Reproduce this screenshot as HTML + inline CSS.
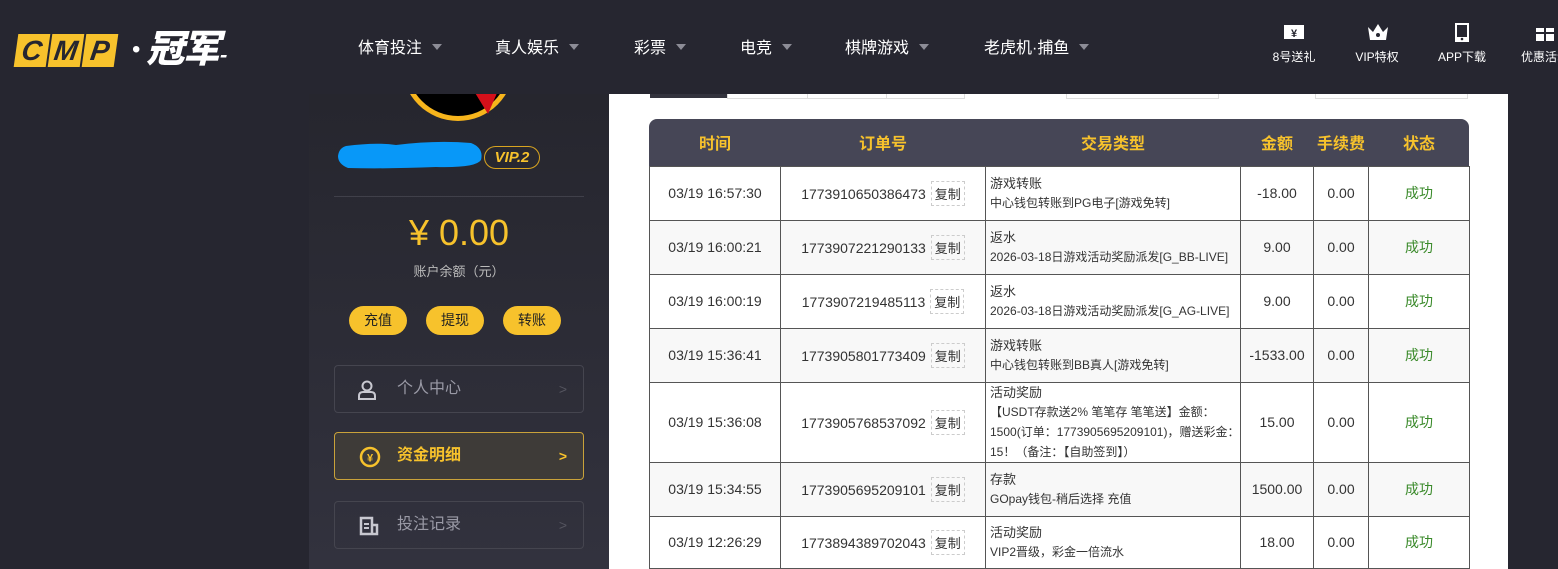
<!DOCTYPE html>
<html style="width:1558px;height:569px;overflow:hidden"><head><meta charset="utf-8"><style>
*{margin:0;padding:0;box-sizing:border-box}
body{width:1558px;height:569px;overflow:hidden;background:#262630;font-family:"Liberation Sans","Noto Sans CJK SC",sans-serif;position:relative}
.hdr{position:absolute;left:0;top:0;width:1558px;height:94px;background:#262630;z-index:5}
.logo{position:absolute;left:16px;top:28px;display:flex;align-items:center}
.lb{width:32px;height:33px;background:#f7c22c;color:#262630;font:italic 900 28px "Liberation Sans",sans-serif;display:flex;align-items:center;justify-content:center;margin-right:2px;transform:skewX(-8deg)}
.lt{color:#fff;font:italic 900 38px "Noto Sans CJK SC",sans-serif;margin-left:6px;letter-spacing:-2px;line-height:36px}
.nav{position:absolute;top:34px;color:#fff;font-size:16px}
.nav i{display:inline-block;margin-left:10px;border-left:5px solid transparent;border-right:5px solid transparent;border-top:6px solid #8c8c96;vertical-align:3px}
.ic{position:absolute;top:22px;color:#fff;font-size:12px;text-align:center;width:70px}
.ic .g{width:22px;height:20px;margin:0 auto 6px;position:relative}
.side{position:absolute;left:309px;top:94px;width:300px;height:475px;background:linear-gradient(#26262e,#32323e)}
.main{position:absolute;left:609px;top:94px;width:899px;height:475px;background:#fff;overflow:hidden}
.btn{position:absolute;top:306px;width:58px;height:29px;border-radius:15px;background:#f7c22c;color:#222;font-size:14px;text-align:center;line-height:29px}
.menu{position:absolute;left:334px;width:250px;height:48px;border:1px solid #45454f;border-radius:4px;color:#9a9aa6;font-size:16px;line-height:46px;padding-left:62px}
.menu .ar{position:absolute;right:16px;top:0;color:#55555f;font-size:14px}
table{position:absolute;left:40px;top:25px;border-collapse:collapse;font-size:14px;color:#333}
th{color:#f7c22c;font-size:16px;height:47px;font-weight:bold}
td{border:1px solid #555;text-align:center}
tr.e td{background:#f8f8f8}
td.t{text-align:left;padding-left:4px;font-size:13px;line-height:19px}
td.t span{font-size:12px}
.cp{display:inline-block;border:1px dashed #ccc;padding:2px 3px;font-size:13px;margin-left:5px}
.ok{color:#3a8a2a}
</style></head><body>
<div class="hdr">
 <div class="logo"><div class="lb">C</div><div class="lb">M</div><div class="lb">P</div><span style="color:#fff;font-size:24px;margin-left:14px">•</span><span class="lt">冠军<span style="font-size:20px">-</span></span></div>
 <div class="nav" style="left:358px">体育投注<i></i></div>
 <div class="nav" style="left:495px">真人娱乐<i></i></div>
 <div class="nav" style="left:634px">彩票<i></i></div>
 <div class="nav" style="left:740px">电竞<i></i></div>
 <div class="nav" style="left:845px">棋牌游戏<i></i></div>
 <div class="nav" style="left:984px">老虎机·捕鱼<i></i></div>
 <div class="ic" style="left:1259px"><div class="g"><svg width="22" height="20"><rect x="1" y="3" width="20" height="14" fill="#fff"/><text x="11" y="15" font-size="11" text-anchor="middle" fill="#262630" font-weight="bold">¥</text></svg></div>8号送礼</div>
 <div class="ic" style="left:1342px"><div class="g"><svg width="24" height="20"><path d="M2 5 L7 10 L12 2 L17 10 L22 5 L20 18 L4 18Z" fill="#fff"/><circle cx="12" cy="13" r="2" fill="#262630"/></svg></div>VIP特权</div>
 <div class="ic" style="left:1427px"><div class="g"><svg width="22" height="22"><rect x="4" y="1" width="14" height="19" fill="#fff"/><rect x="6" y="3" width="10" height="12" fill="#262630"/><circle cx="11" cy="17" r="1.3" fill="#262630"/></svg></div>APP下载</div>
 <div class="ic" style="left:1510px"><div class="g"><svg width="22" height="20"><rect x="2" y="6" width="18" height="13" fill="#fff"/><rect x="10" y="6" width="2" height="13" fill="#262630"/><rect x="2" y="10" width="18" height="2" fill="#262630"/></svg></div>优惠活动</div>
</div>
<div class="side"></div>
<svg style="position:absolute;left:400px;top:94px;z-index:1" width="116" height="30"><clipPath id="c"><rect x="0" y="0" width="116" height="30"/></clipPath><g clip-path="url(#c)"><circle cx="58" cy="-29" r="56" fill="#f7b51c"/><circle cx="58" cy="-29" r="51" fill="#000"/><path d="M58 -29 L109 -29 L88 20 Z" fill="#d4101a"/></g></svg>
<svg style="position:absolute;left:336px;top:140px" width="150" height="32"><path d="M10 6 Q40 2 60 5 Q100 0 135 3 Q148 8 145 20 Q140 28 100 27 Q50 29 12 28 Q2 24 2 16 Q3 8 10 6Z" fill="#0898f8"/></svg>
<div style="position:absolute;left:484px;top:146px;width:56px;height:23px;border:1px solid #d8a420;border-radius:12px;color:#f7c22c;font:italic bold 15px 'Liberation Sans',sans-serif;text-align:center;line-height:21px">VIP.2</div>
<div style="position:absolute;left:334px;top:196px;width:250px;height:1px;background:#40404a"></div>
<div style="position:absolute;left:309px;top:212px;width:300px;text-align:center;color:#f7c22c;font-size:36px">¥ 0.00</div>
<div style="position:absolute;left:309px;top:261px;width:300px;text-align:center;color:#bbb;font-size:13px">账户余额（元）</div>
<div class="btn" style="left:349px">充值</div><div class="btn" style="left:426px">提现</div><div class="btn" style="left:503px">转账</div>
<div class="menu" style="top:365px">个人中心<span class="ar">&gt;</span><svg style="position:absolute;left:22px;top:14px" width="20" height="20"><circle cx="10" cy="6" r="4.5" fill="none" stroke="#c8c8d0" stroke-width="2"/><path d="M2 19 V16 Q2 12 6 12 H14 Q18 12 18 16 V19Z" fill="none" stroke="#c8c8d0" stroke-width="2"/></svg></div>
<div class="menu" style="top:432px;border-color:#c9a23a;background:#3e3b38;color:#f7c22c;font-weight:bold">资金明细<span class="ar" style="color:#f7c22c">&gt;</span><svg style="position:absolute;left:24px;top:13px" width="22" height="22"><circle cx="11" cy="11" r="9" fill="none" stroke="#f7c22c" stroke-width="2.5"/><text x="11" y="15.5" font-size="11" text-anchor="middle" fill="#f7c22c" font-weight="bold">¥</text></svg></div>
<div class="menu" style="top:501px">投注记录<span class="ar">&gt;</span><svg style="position:absolute;left:24px;top:14px" width="20" height="20"><path d="M2 2H13V18H2Z M13 9H18V18H13" fill="none" stroke="#c8c8d0" stroke-width="2.5"/><path d="M5 8H10 M5 12H10" stroke="#c8c8d0" stroke-width="2"/></svg></div>
<div class="main">
<div style="position:absolute;left:41px;top:0;width:77px;height:4px;background:#33333d"></div>
<div style="position:absolute;left:118px;top:0;width:238px;height:5px;border:1px solid #ddd;border-top:none"></div>
<div style="position:absolute;left:198px;top:0;width:1px;height:5px;background:#ddd"></div>
<div style="position:absolute;left:277px;top:0;width:1px;height:5px;background:#ddd"></div>
<div style="position:absolute;left:457px;top:0;width:153px;height:5px;border:1px solid #ddd;border-top:none"></div>
<div style="position:absolute;left:706px;top:0;width:153px;height:5px;border:1px solid #ddd;border-top:none"></div>
<div style="position:absolute;left:40px;top:25px;width:820px;height:47px;background:#464656;border-radius:8px 8px 0 0"></div>
<table>
<tr><th style="width:131px">时间</th><th style="width:205px">订单号</th><th style="width:255px">交易类型</th><th style="width:73px">金额</th><th style="width:55px">手续费</th><th style="width:101px">状态</th></tr>
<tr style="height:54px"><td>03/19 16:57:30</td><td>1773910650386473<span class="cp">复制</span></td><td class="t">游戏转账<br><span>中心钱包转账到PG电子[游戏免转]</span></td><td>-18.00</td><td>0.00</td><td class="ok">成功</td></tr>
<tr class="e" style="height:54px"><td>03/19 16:00:21</td><td>1773907221290133<span class="cp">复制</span></td><td class="t">返水<br><span>2026-03-18日游戏活动奖励派发[G_BB-LIVE]</span></td><td>9.00</td><td>0.00</td><td class="ok">成功</td></tr>
<tr style="height:54px"><td>03/19 16:00:19</td><td>1773907219485113<span class="cp">复制</span></td><td class="t">返水<br><span>2026-03-18日游戏活动奖励派发[G_AG-LIVE]</span></td><td>9.00</td><td>0.00</td><td class="ok">成功</td></tr>
<tr class="e" style="height:54px"><td>03/19 15:36:41</td><td>1773905801773409<span class="cp">复制</span></td><td class="t">游戏转账<br><span>中心钱包转账到BB真人[游戏免转]</span></td><td>-1533.00</td><td>0.00</td><td class="ok">成功</td></tr>
<tr style="height:77px"><td>03/19 15:36:08</td><td>1773905768537092<span class="cp">复制</span></td><td class="t">活动奖励<br><span>【USDT存款送2% 笔笔存 笔笔送】金额：1500(订单：1773905695209101)，赠送彩金：15！（备注：【自助签到】）</span></td><td>15.00</td><td>0.00</td><td class="ok">成功</td></tr>
<tr class="e" style="height:54px"><td>03/19 15:34:55</td><td>1773905695209101<span class="cp">复制</span></td><td class="t">存款<br><span>GOpay钱包-稍后选择 充值</span></td><td>1500.00</td><td>0.00</td><td class="ok">成功</td></tr>
<tr style="height:52px"><td>03/19 12:26:29</td><td>1773894389702043<span class="cp">复制</span></td><td class="t">活动奖励<br><span>VIP2晋级，彩金一倍流水</span></td><td>18.00</td><td>0.00</td><td class="ok">成功</td></tr>
</table>
</div>
</body></html>
